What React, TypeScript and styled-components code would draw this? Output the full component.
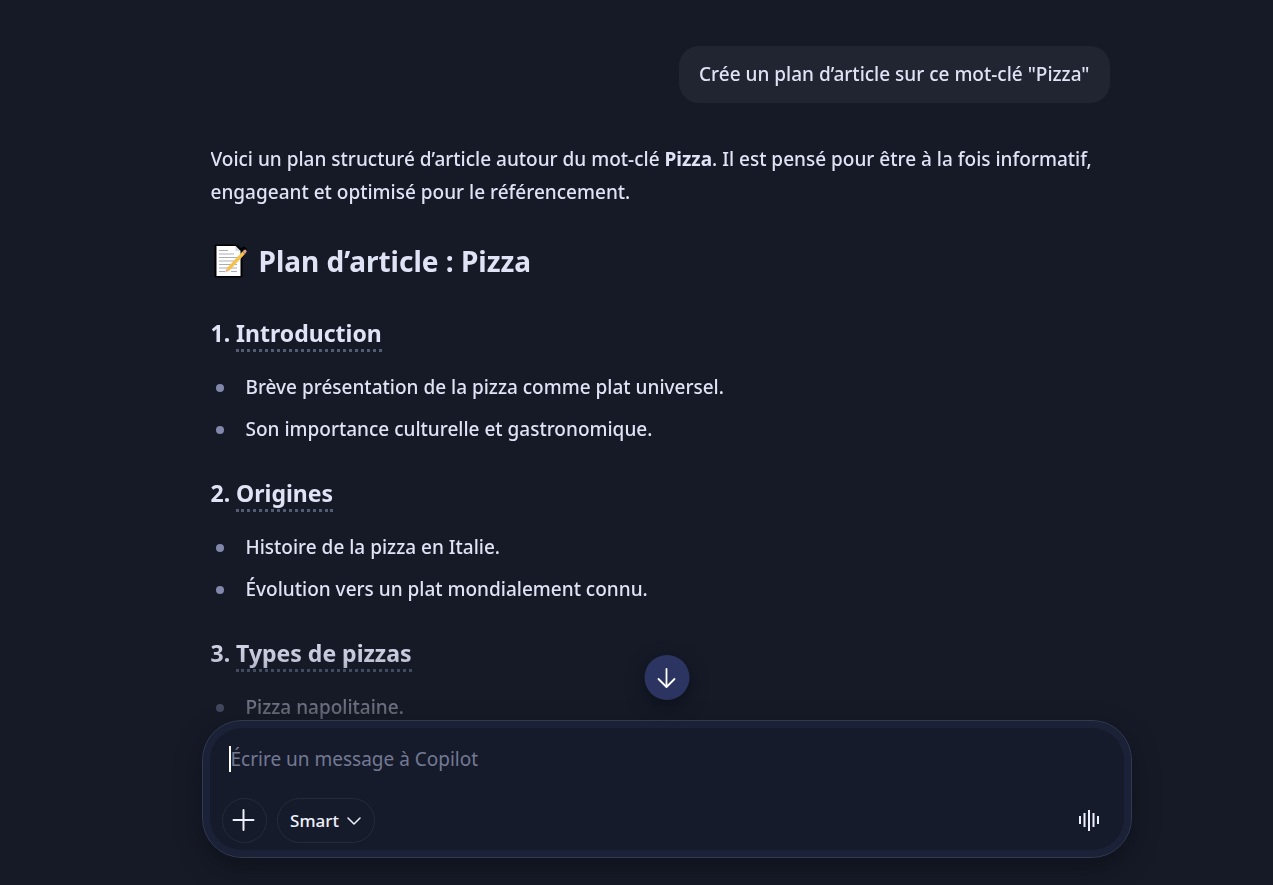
import React from "react";
import styled, { createGlobalStyle } from "styled-components";

const GlobalStyle = createGlobalStyle`
  *, *::before, *::after { box-sizing: border-box; }
  body {
    margin: 0;
    background: #161a27;
    color: #dfe3f5;
    font-family: "Noto Sans", sans-serif;
    font-size: 19px;
    font-weight: 500;
    line-height: 33px;
  }
  h1, h2, p, ul { margin: 0; padding: 0; }
  button { font: inherit; color: inherit; padding: 0; cursor: pointer; }
`;

const Page = styled.div`
  height: 100vh;
  display: flex;
  flex-direction: column;
  align-items: center;
  padding: 0 20px 27px 80px;
`;

const Thread = styled.main`
  flex: 1;
  min-height: 0;
  width: 100%;
  max-width: 912px;
  overflow: hidden;
  display: flex;
  flex-direction: column;
  padding-top: 46px;
  mask-image: linear-gradient(to top, rgba(0, 0, 0, 0.35) 0, rgba(0, 0, 0, 0.45) 20px, rgba(0, 0, 0, 0.85) 60px, #000 90px);
`;

const UserBubble = styled.p`
  align-self: flex-end;
  margin-right: 13px;
  padding: 12px 20px;
  border-radius: 20px;
  background: #212531;
`;

const Answer = styled.article`
  display: flex;
  flex-direction: column;
  margin-top: 40px;
`;

const Title = styled.h1`
  display: flex;
  align-items: center;
  gap: 12px;
  margin: 32px 0 5px;
  font-size: 28px;
  line-height: 40px;
  font-weight: 700;
`;

const Section = styled.section`
  margin-top: 27px;
`;

const SectionTitle = styled.h2`
  font-size: 23px;
  line-height: 40px;
  font-weight: 700;
`;

const Term = styled.span`
  border-bottom: 3px dotted #555b73;
`;

const List = styled.ul`
  display: flex;
  flex-direction: column;
  gap: 9px;
  margin-top: 18px;
  list-style: none;
`;

const Item = styled.li`
  display: flex;
  align-items: center;
  gap: 22px;
  padding-left: 5px;

  &::before {
    content: "";
    width: 8px;
    height: 8px;
    border-radius: 50%;
    background: #8188ab;
  }
`;

const Dock = styled.div`
  position: relative;
  width: 100%;
  max-width: 930px;
`;

const ScrollButton = styled.button`
  position: absolute;
  left: 50%;
  bottom: calc(100% + 20px);
  transform: translateX(-50%);
  width: 45px;
  height: 45px;
  display: grid;
  place-items: center;
  border: 0;
  border-radius: 50%;
  background: #2c3561;
  color: #fff;
  box-shadow: 0 6px 18px rgba(4, 8, 16, 0.5);
`;

const Composer = styled.form`
  display: flex;
  flex-direction: column;
  gap: 21px;
  padding: 20px 20px 14px 19px;
  border: 1px solid #333a50;
  border-radius: 40px;
  background: #161b2b;
  box-shadow: inset 0 0 0 7px #1b2136, 0 10px 24px rgba(8, 12, 18, 0.5);
`;

const Field = styled.label`
  display: flex;
  align-items: center;
  height: 36px;
  padding-left: 7px;
`;

const Caret = styled.span`
  width: 2px;
  height: 26px;
  background: #fff;
`;

const MessageInput = styled.input`
  flex: 1;
  min-width: 0;
  padding: 0;
  border: 0;
  outline: 0;
  background: none;
  color: inherit;
  font: inherit;
  font-weight: 400;

  &::placeholder { color: #737993; opacity: 1; }
`;

const Toolbar = styled.div`
  display: flex;
  align-items: center;
  gap: 10px;
`;

const PillButton = styled.button<{ $round?: boolean }>`
  display: flex;
  align-items: center;
  justify-content: center;
  gap: 8px;
  height: 45px;
  width: ${(p) => (p.$round ? "45px" : "98px")};
  border: 1px solid #262b3c;
  border-radius: 23px;
  background: transparent;
  color: #eef0fb;
  font-size: 17px;
`;

const VoiceButton = styled.button`
  display: grid;
  place-items: center;
  width: 45px;
  height: 45px;
  margin-left: auto;
  border: 0;
  background: none;
`;

const MemoIcon = () => (
  <svg width="36" height="36" viewBox="0 0 36 36" aria-hidden="true">
    <path d="M5 3h20l5 4 3-2 2 2-5 8v18H5z" fill="#000" stroke="#000" strokeWidth="3" strokeLinejoin="round" />
    <path d="M5.500 3h19l5 5v25h-24z" fill="#fff" />
    <path d="M24.500 3v5h5z" fill="#d5d8dd" />
    <path d="M8 7.500h9M8 11h15M8 14.500h18M8 18h18M8 21.500h18M8 25h18M8 28.500h6M20 28.500h6" stroke="#a9adb4" strokeWidth="1" />
    <path d="M15.500 25.500L31.500 8.500l2.500 2.500L18 28z" fill="#f6c04d" />
    <path d="M31.500 8.500l1.500-1.500q1-1 2 0t.5 2l-1.500 2z" fill="#e5a08d" />
    <path d="M14 29.500l1.500-4L18 28z" fill="#f0b49a" />
  </svg>
);

const sections = [
  {
    term: "Introduction",
    items: ["Brève présentation de la pizza comme plat universel.", "Son importance culturelle et gastronomique."],
  },
  { term: "Origines", items: ["Histoire de la pizza en Italie.", "Évolution vers un plat mondialement connu."] },
  { term: "Types de pizzas", items: ["Pizza napolitaine."] },
];

export default function App() {
  return (
    <>
      <GlobalStyle />
      <Page>
        <Thread>
          <UserBubble>Crée un plan d’article sur ce mot-clé "Pizza"</UserBubble>
          <Answer>
            <p>
              Voici un plan structuré d’article autour du mot-clé <strong>Pizza</strong>. Il est pensé pour être à la
              fois informatif, engageant et optimisé pour le référencement.
            </p>
            <Title>
              <MemoIcon />
              Plan d’article : Pizza
            </Title>
            {sections.map((section, index) => (
              <Section key={section.term}>
                <SectionTitle>
                  {index + 1}. <Term>{section.term}</Term>
                </SectionTitle>
                <List>
                  {section.items.map((item) => (
                    <Item key={item}>{item}</Item>
                  ))}
                </List>
              </Section>
            ))}
          </Answer>
        </Thread>
        <Dock>
          <ScrollButton type="button" aria-label="Descendre">
            <svg width="20" height="22" viewBox="0 0 20 22" fill="none" stroke="currentColor" strokeWidth="1.800" strokeLinecap="round" strokeLinejoin="round">
              <path d="M10 2v18M2 12l8 8 8-8" />
            </svg>
          </ScrollButton>
          <Composer onSubmit={(e) => e.preventDefault()}>
            <Field>
              <Caret />
              <MessageInput aria-label="Message" placeholder="Écrire un message à Copilot" />
            </Field>
            <Toolbar>
              <PillButton type="button" $round aria-label="Ajouter">
                <svg width="24" height="24" viewBox="0 0 24 24" fill="none" stroke="currentColor" strokeWidth="2" strokeLinecap="round">
                  <path d="M11.500 1v20M1.500 11h20" />
                </svg>
              </PillButton>
              <PillButton type="button">
                Smart
                <svg width="14" height="10" viewBox="0 0 14 10" fill="none" stroke="currentColor" strokeWidth="1.500" strokeLinecap="round" strokeLinejoin="round">
                  <path d="M1 2l6 6 6-6" />
                </svg>
              </PillButton>
              <VoiceButton type="button" aria-label="Parler">
                <svg width="22" height="22" viewBox="0 0 22 22" fill="none" stroke="#eef0fb" strokeWidth="2">
                  <path d="M3 6v8M7.500 3v14M12 0v21M16.500 3v14M21 6v8" />
                </svg>
              </VoiceButton>
            </Toolbar>
          </Composer>
        </Dock>
      </Page>
    </>
  );
}
